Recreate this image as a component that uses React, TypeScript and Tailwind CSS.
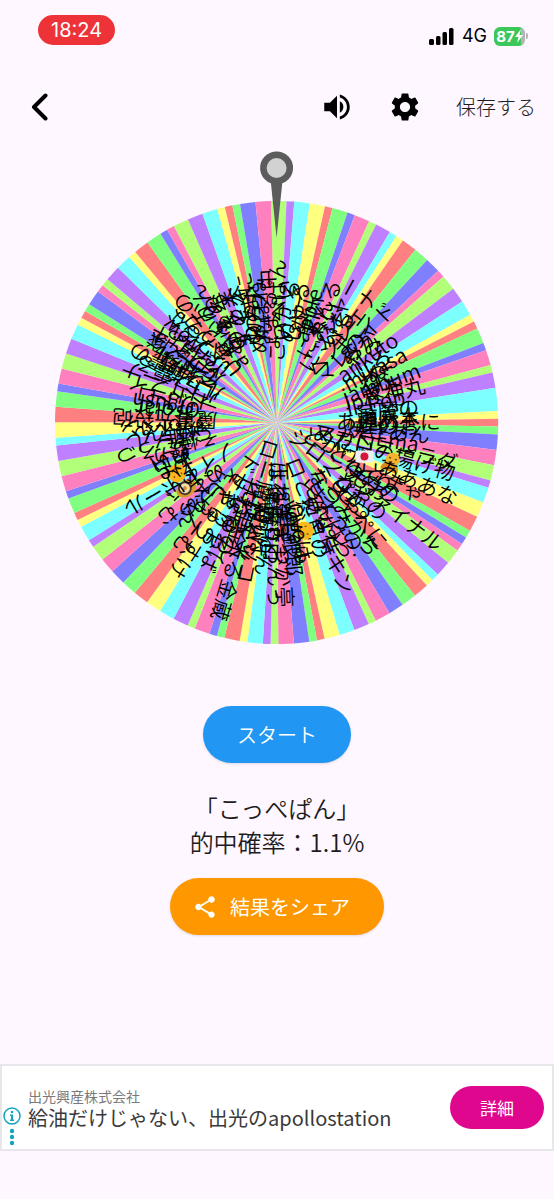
import React from "react";
import { MdSettings, MdShare, MdVolumeUp } from "react-icons/md";

type Slice = [units: number, label: string, emoji?: "face" | "flag" | "person" | "bowl"];

const COLORS = [
  "#b2ff7a",
  "#bf80ff",
  "#7dffff",
  "#ffff80",
  "#ff8080",
  "#80ff80",
  "#8080ff",
  "#ff80bf",
];

const SLICES: Slice[] = [
  [2, "こっぺぱん"], [1, "いがい"], [2, "ぬこる"], [2, "しゅる"],
  [1, "ぬこ"], [2, "apple"], [1, "まい"], [2, "にゃんる"],
  [1, "みい"], [2, "にッシャー"], [1, "いむ"], [1, "ぺる"],
  [2, "ヘンレェナ"], [2, "まこ"], [2, "マレのイド"], [1, "みか"],
  [2, "やみ"], [2, "arikuto"], [2, "しろ"], [1, "mikasa"],
  [1, "ぬ"], [2, "ねこ"], [1, "jambum"], [2, "ヤト"],
  [1, "jp柊神丸"], [2, "Pop"], [3, "宗魔の"], [1, "瀬麻木"],
  [1, "あ煌めきに"], [1, "煌のお"], [2, "焼きあん"], [2, "くEma"],
  [2, "マカロニーラダ"], [1, "めだいの揚げ物"], [2, "", "person"], [2, "とかげ゛あああな"],
  [2, "どんとまゃ"], [1, "とり"], [1, "ゆめの"], [1, "もお"],
  [2, "ジロンスファイナル"], [2, "とやの"], [1, "ぴか。"], [1, "せつ"],
  [2, "ミさやぺに"], [2, "なつみかち"], [2, "しょうの."], [2, "きんはら"],
  [1, "みなと"], [2, "ロとにゃ侍キン"], [2, "忍見の"], [2, "", "face"],
  [1, "Qveは"], [1, "vegaゆ"], [2, "ga星銀郎"], [2, "玉ねぎまつか亭"],
  [1, "はるまきおんっ"], [1, "魔Dロ"], [2, "魔おゆん"], [1, "Quぱ"],
  [2, "魔神パソコ"], [1, "たくソ"], [1, "ローレン主米る金蔵"], [2, "せ里金し"],
  [1, "ねるの"], [2, "せなゆろば"], [2, "ゃりお"], [2, "ドせゃゅうすけ"],
  [2, "ぇとぅーむ"], [2, "しゅん"], [2, "マめ"], [2, "ぬおごむ"],
  [2, "", "bowl"], [1, "あい"], [2, "ノイドボール"], [1, "", "face"],
  [1, "ひe"], [2, "おも"], [1, "ぬい"], [2, "なか"],
  [2, "そ焼ころつ"], [2, "ぶ雄んじ"], [1, "焼えん"], [2, "ずrolぺン"],
  [2, "魔貫光殺砲"], [2, "おolar"], [1, "Ofgush"], [2, "リトロ"],
  [2, "ドトライ"], [2, "アドレーナ"], [2, "ロフ霊る"], [1, "ルフ瀬霊の"],
  [1, "神威"], [1, "ジゼル"], [2, "そトマ隊"], [1, "ルヴィ.キ"],
  [1, "デ璃お"], [2, "Yerwow"], [2, "いづるな"], [1, "べりか"],
  [2, "Uぁりーの"], [2, "せぃか"], [1, "aおゅりん"], [1, "ひぁぬ"],
  [2, "のえる"], [2, "すあ末"], [2, "もく本"], [1, "のあく"],
  [1, "めのまに"], [1, "ゅうた"], [2, "んほね"], [2, "ょまる中"],
];

const RADIUS = 222;
const LABEL_RADIUS = 112;
const START_ANGLE = -1.45;

const total = SLICES.reduce((sum, slice) => sum + slice[0], 0);

const placed = SLICES.map(([units, label, emoji], i) => {
  const before = SLICES.slice(0, i).reduce((sum, slice) => sum + slice[0], 0);
  const from = START_ANGLE + (before / total) * 360;
  const to = from + (units / total) * 360;
  return { label, emoji, from, to, color: COLORS[i % COLORS.length] };
});

function point(angle: number) {
  const a = (angle * Math.PI) / 180;
  return `${(RADIUS * Math.sin(a)).toFixed(2)} ${(-RADIUS * Math.cos(a)).toFixed(2)}`;
}

function Emoji({ kind }: { kind: string }) {
  if (kind === "flag") {
    return (
      <g>
        <rect x="-9" y="-6" width="18" height="12" rx="2" fill="#eceff1" />
        <circle r="4" fill="#d3183c" />
      </g>
    );
  }
  if (kind === "bowl") {
    return (
      <g>
        <ellipse rx="11" ry="8" fill="#d99a2b" />
        <circle cx="1" cy="1" r="6" fill="#f4dfae" stroke="#4a3c2c" strokeWidth="2" />
        <circle cx="1" cy="1" r="2" fill="#e08a2c" />
      </g>
    );
  }
  if (kind === "person") {
    return (
      <g>
        <path d="M-9 9C-9 2-5 0 0 0s9 2 9 9z" fill="#d98a1c" />
        <circle cy="-3" r="7" fill="#f5b52e" />
        <path d="M-4-4h2M2-4h2M-3 0q3 2 6 0" stroke="#6b3d0c" strokeWidth="1.5" fill="none" />
      </g>
    );
  }
  return (
    <g>
      <circle r="9" fill="#fdb71c" />
      <path d="M-4-3v2M4-3v2M-4 3q4 4 8 0" stroke="#8a5208" strokeWidth="1.5" fill="none" />
    </g>
  );
}

function Wheel() {
  return (
    <svg
      viewBox="-222 -272 444 494"
      className="mx-auto mt-3 block w-4/5"
      role="img"
      aria-label="ルーレット"
    >
      {placed.map((s, i) => (
        <path key={i} d={`M0 0L${point(s.from)}A${RADIUS} ${RADIUS} 0 0 1 ${point(s.to)}Z`} fill={s.color} />
      ))}
      {placed.map((s, i) => (
        <g key={i} transform={`rotate(${(s.from + s.to) / 2 - 90}) translate(${LABEL_RADIUS} 0)`}>
          {s.emoji ? (
            <g transform={s.emoji === "person" ? "translate(10 0)" : undefined}>
              <Emoji kind={s.emoji} />
            </g>
          ) : (
            <text textAnchor="middle" y="7" fontSize="21" className="fill-black font-[350]">
              {s.label}
            </text>
          )}
        </g>
      ))}
      <g transform="translate(88 34)">
        <Emoji kind="flag" />
      </g>
      <path d="M-6-243L6-243L0-185Z" fill="#5c5c5c" />
      <circle cy="-255" r="16.5" fill="#5c5c5c" />
      <circle cy="-255" r="10" fill="#d2d2d2" />
    </svg>
  );
}

function StatusBar() {
  return (
    <div className="flex items-start justify-between pt-[15px] pr-[26px] pl-[38px]">
      <div className="flex h-[30px] items-center rounded-full bg-[#ee3338] px-[13px] font-['Inter',sans-serif] text-[20px] leading-none text-white">
        18:24
      </div>
      <div className="mt-[11px] flex h-5 items-center">
        <svg viewBox="0 0 25 17" className="mr-2 h-[17px] w-[25px]" aria-hidden="true">
          <rect x="0" y="11" width="5" height="6" rx="1.5" />
          <rect x="7" y="8" width="4.5" height="9" rx="1.5" />
          <rect x="13.5" y="4" width="4.5" height="13" rx="1.5" />
          <rect x="20" y="0" width="4.5" height="17" rx="1.5" />
        </svg>
        <span className="mr-[7px] font-['Inter',sans-serif] text-[18px] leading-none text-black">4G</span>
        <div className="flex h-[19px] w-[31px] items-center justify-center rounded-md bg-linear-to-r from-[#3cc75a] from-88% to-[#b3b3b8] to-88% font-['Inter',sans-serif] text-[15px] leading-none font-bold text-white">
          87
          <svg viewBox="0 0 8 14" className="h-[14px] w-2" fill="white" aria-hidden="true">
            <path d="M6 0L0 8h3.500L2 14L8 6H4.500z" />
          </svg>
        </div>
        <div className="ml-px h-[6px] w-[2px] rounded-r-full bg-[#b3b3b8]" />
      </div>
    </div>
  );
}

function Toolbar() {
  return (
    <header className="mt-9 flex h-[50px] items-center pr-[18px] pl-[30px] text-black">
      <button type="button" aria-label="戻る" className="mr-auto">
        <svg viewBox="0 0 18 28" className="h-7 w-[18px]" fill="none" stroke="black" strokeWidth="4" strokeLinecap="round" strokeLinejoin="round">
          <path d="M15.500 2.500L4 14l11.500 11.500" />
        </svg>
      </button>
      <button type="button" aria-label="音量" className="mr-[34px]">
        <MdVolumeUp size={34} />
      </button>
      <button type="button" aria-label="設定" className="mr-[34px]">
        <MdSettings size={34} />
      </button>
      <button type="button" className="text-[20px] leading-7 font-light text-[#1d1b20]">
        保存する
      </button>
    </header>
  );
}

function AdBanner() {
  return (
    <aside className="mt-auto mb-12 flex h-[87px] items-center border-2 border-[#e8e6ea] bg-white pr-2">
      <div className="mr-[6px] flex w-5 flex-col items-center self-end pb-[3px]">
        <svg viewBox="0 0 18 39" className="h-[39px] w-[18px]" fill="#12a5bd" aria-hidden="true">
          <circle cx="9" cy="9" r="8" fill="none" stroke="#12a5bd" strokeWidth="1.500" />
          <circle cx="9" cy="5" r="1.300" />
          <path d="M7 7.500h3v5h1V14H7v-1.500h1V9H7z" />
          <circle cx="9" cy="24" r="2.200" />
          <circle cx="9" cy="30" r="2.200" />
          <circle cx="9" cy="36" r="2.200" />
        </svg>
      </div>
      <div className="min-w-0 flex-1 whitespace-nowrap">
        <p className="text-[14px] leading-5 text-[#7a7a7a]">出光興産株式会社</p>
        <p className="text-[20px] leading-6 text-[#3a3a3a]">給油だけじゃない、出光のapollostation</p>
      </div>
      <a href="#details" className="flex h-[43px] w-[94px] items-center justify-center rounded-full bg-[#e0078f] text-[17px] text-white">
        詳細
      </a>
    </aside>
  );
}

export default function App() {
  return (
    <div className="flex min-h-screen flex-col overflow-hidden bg-[#fef7ff] font-['Noto_Sans_CJK_JP',sans-serif] text-[#1d1b20]">
      <StatusBar />
      <Toolbar />
      <main className="flex flex-col items-center pt-[7px]">
        <Wheel />
        <button type="button" className="mt-[62px] h-[57px] w-[148px] rounded-full bg-[#2196f3] text-[20px] font-[350] text-white shadow">
          スタート
        </button>
        <p className="mt-7 text-center text-[24px] leading-[34px] font-[350]">
          「こっぺぱん」
          <br />
          的中確率：1.1%
        </p>
        <button type="button" className="mt-[19px] flex h-[57px] w-[214px] items-center justify-center gap-3 rounded-full bg-[#ff9800] pr-3 text-[20px] font-normal text-white shadow">
          <MdShare size={26} />
          結果をシェア
        </button>
      </main>
      <AdBanner />
    </div>
  );
}
